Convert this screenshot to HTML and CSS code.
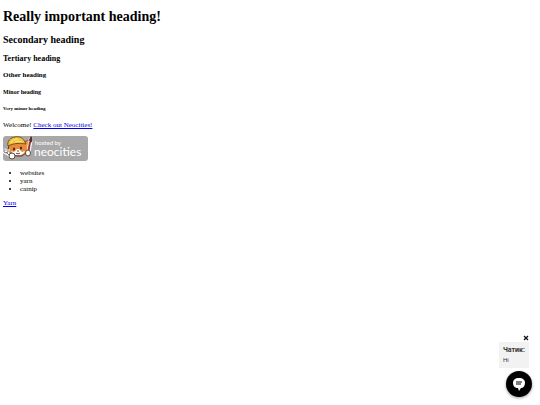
FILE: index.html
```html
<!DOCTYPE html>
<html lang="en">
<head>
    <meta charset="UTF-8">
    <meta name="viewport" content="width=device-width, initial-scale=1.0">
    <title>My site</title>
    <link rel="stylesheet" href="styles.css">
</head>
<body>
    <h1>Really important heading!</h1>
    <h2>Secondary heading</h2>
    <h3>Tertiary heading</h3>
    <h4>Other heading</h4>
    <h5>Minor heading</h5>
    <h6>Very minor heading</h6>

    <p>Welcome! <a href="#neocities">Check out Neocities!</a></p>

    <a class="badge" href="#neocities" aria-label="Hosted by Neocities">
        <svg viewBox="0 0 85 25" width="85" height="25">
            <rect x="0" y="0" width="85" height="25" rx="3" fill="#a8a8a8"/>
            <!-- cat -->
            <path d="M6 9L5 14l3 4 5 2 6 0 4-3 2-4 0-9-4 3-8-1z" fill="#e88a37" stroke="#5b3823"/>
            <path d="M8 15l3 1 3-3 2 0 3 3 3-1-1 2-3 2h-5l-3-1z" fill="#fff"/>
            <path d="M22 7l3-3v7l-2 1z" fill="#f09a48"/>
            <path d="M5 10C4 5 7 2 12 1c5-1 8 1 10 5l1 2c-6-1-12-1-18 2z" fill="#f2c53d" stroke="#765020"/>
            <path d="M8 7c1-3 4-4 7-4M12 6c2-1 5-1 7 0" fill="none" stroke="#ffe68b"/>
            <ellipse cx="11" cy="13" rx="1" ry="1.5" fill="#38251d"/>
            <ellipse cx="18" cy="12" rx="1" ry="1.5" fill="#38251d"/>
            <path d="M14 15h2M13 17c1 1 3 1 4 0" fill="none" stroke="#75412b"/>
            <!-- wrench -->
            <path d="M1 12v4l2 1 2-1v-3M3 16l6 6" fill="none" stroke="#fff" stroke-width="3"/>
            <path d="M1 12v4l2 1 2-1v-3M3 16l6 6" fill="none" stroke="#77716e" stroke-width="1"/>
            <circle cx="9" cy="20" r="3" fill="#fff" stroke="#63453a"/>
            <!-- brush -->
            <path d="M28 2L25 19" stroke="#fff" stroke-width="4"/>
            <path d="M27 6L25 18" stroke="#963a30" stroke-width="2"/>
            <path d="M27 6c-2-2 0-4 1-6 2 2 2 5 0 7z" fill="#622b29"/>
            <ellipse cx="25" cy="17" rx="2.5" ry="3" fill="#fff" stroke="#63453a"/>
            <text class="badge-small" x="32" y="9">hosted by</text>
            <text class="badge-name" x="31" y="20">neocities</text>
        </svg>
    </a>

    <ul>
        <li>websites</li>
        <li>yarn</li>
        <li>catnip</li>
    </ul>

    <p><a href="#yarn">Yarn</a></p>

    <div class="chat">
        <button class="chat-close" type="button" aria-label="Close">
            <svg viewBox="0 0 6 6" width="6" height="6">
                <path d="M1 1l4 4M5 1L1 5" stroke="#111" stroke-width="1.3"/>
            </svg>
        </button>
        <div class="chat-message">
            <strong>Чатик:</strong>
            <span>Hi</span>
        </div>
        <button class="chat-open" type="button" aria-label="Open chat">
            <svg viewBox="0 0 14 14" width="14" height="14">
                <path d="M7 1c4 0 6 2 6 5s-2 5-4 5l-2 3-1-3C3 11 1 9 1 6s2-5 6-5z" fill="#fff"/>
                <path d="M4 5h6M4 7h5" stroke="#000"/>
            </svg>
        </button>
    </div>
</body>
</html>
```

FILE: styles.css
```css
body {
    margin: 9px 3px;
    background: #fff;
    color: #000;
    font-family: "Liberation Serif", "Times New Roman", serif;
    font-size: 7px;
    line-height: 8px;
}
h1 {
    margin: 0 0 10px;
    font-size: 14px;
    line-height: 15px;
}
h2 {
    margin: 0 0 8px;
    font-size: 10px;
    line-height: 12px;
}
h3 {
    margin: 0 0 8px;
    font-size: 8px;
    line-height: 9px;
}
h4 {
    margin: 0 0 9px;
    font-size: 7px;
}
h5 {
    margin: 0 0 9px;
    font-size: 6px;
}
h6 {
    margin: 0 0 8px;
    font-size: 5px;
}
p {
    margin: 0 0 7px;
}
a {
    color: #0000ee;
}
ul {
    margin: 8px 0 6px;
    padding-left: 17px;
}
.badge {
    display: block;
    width: 85px;
}
.badge svg {
    display: block;
}
.badge text {
    fill: #fff;
    font-family: Lato, "Open Sans", sans-serif;
}
.badge-small {
    font-size: 6px;
}
.badge-name {
    font-size: 12px;
}

/* chat widget */
.chat {
    position: fixed;
    right: 8px;
    bottom: 8px;
    display: flex;
    flex-direction: column;
    align-items: flex-end;
    font-family: Roboto, "Liberation Sans", sans-serif;
}
.chat button {
    padding: 0;
    border: 0;
    cursor: pointer;
}
.chat svg {
    display: block;
}
.chat-close {
    margin: 0 3px 1px;
    background: transparent;
}
.chat-message {
    display: flex;
    flex-direction: column;
    gap: 2px;
    margin-right: 3px;
    padding: 4px;
    background: #f2f2f2;
    color: #333;
    font-size: 7px;
}
.chat-message span {
    font-size: 6px;
}
.chat-open {
    display: flex;
    align-items: center;
    justify-content: center;
    width: 26px;
    height: 26px;
    margin-top: 3px;
    border-radius: 50%;
    background: #000;
    box-shadow: 0 1px 3px rgba(0, 0, 0, 0.4);
}
```
